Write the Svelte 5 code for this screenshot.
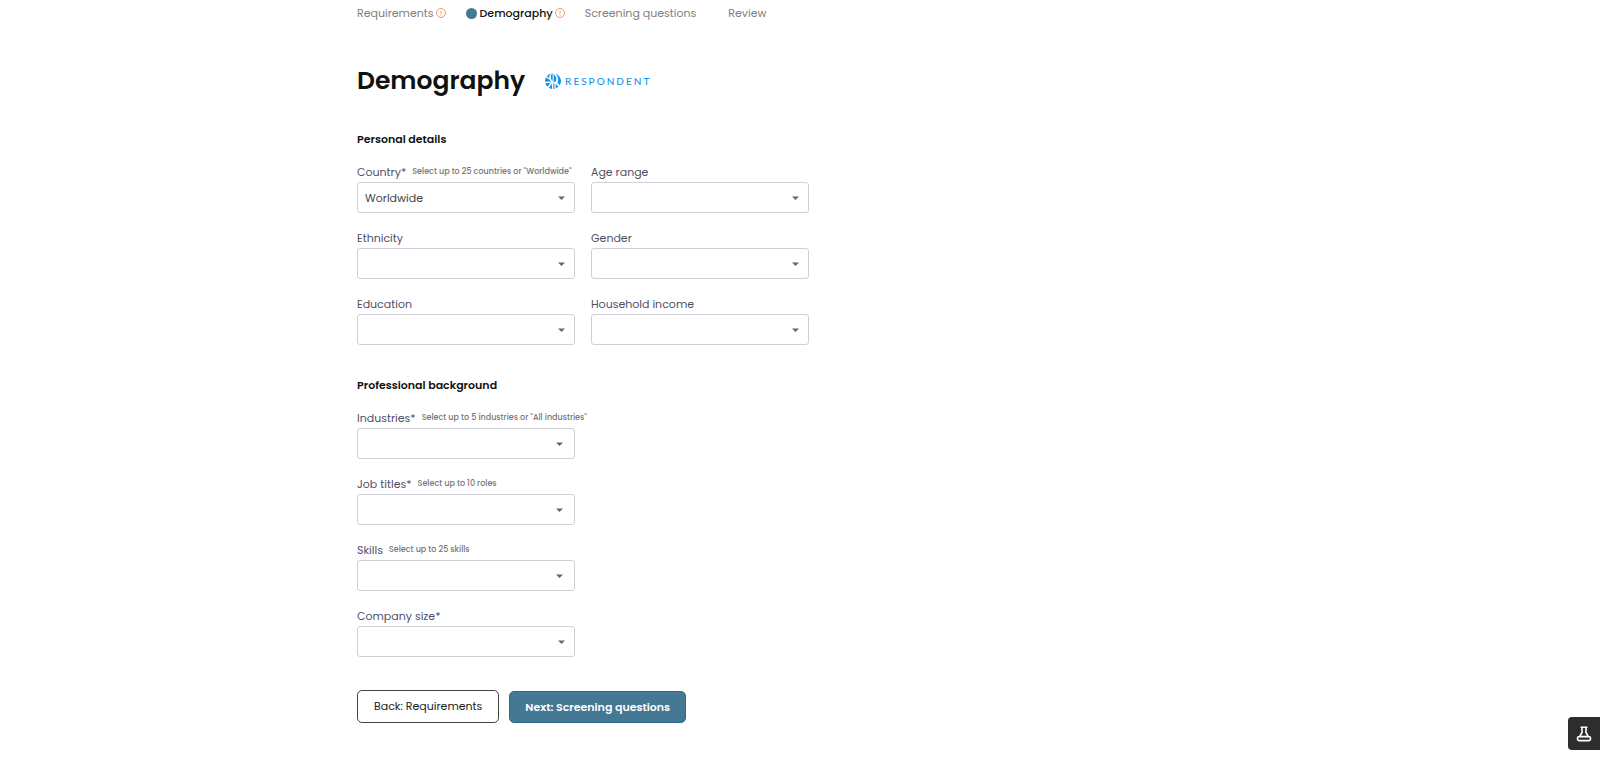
<script>
  let steps = [
    { name: "Requirements", warn: true },
    { name: "Demography", warn: true, current: true },
    { name: "Screening questions" },
    { name: "Review" },
  ];

  let personal = [
    {
      id: "country",
      label: "Country*",
      hint: 'Select up to 25 countries or "Worldwide"',
      value: "Worldwide",
    },
    { id: "age", label: "Age range" },
    { id: "ethnicity", label: "Ethnicity" },
    { id: "gender", label: "Gender" },
    { id: "education", label: "Education" },
    { id: "income", label: "Household income" },
  ];

  let professional = [
    {
      id: "industries",
      label: "Industries*",
      hint: 'Select up to 5 industries or "All industries"',
      search: true,
    },
    {
      id: "titles",
      label: "Job titles*",
      hint: "Select up to 10 roles",
      search: true,
    },
    {
      id: "skills",
      label: "Skills",
      hint: "Select up to 25 skills",
      search: true,
    },
    { id: "size", label: "Company size*" },
  ];
</script>

{#snippet field(f)}
  <div class="field">
    <label class="field__label" for={f.id}>
      {f.label}
      {#if f.hint}<small class="field__hint">{f.hint}</small>{/if}
    </label>
    <div class="field__box" class:field__box--search={f.search}>
      <select id={f.id} class="field__select">
        <option>{f.value ?? ""}</option>
      </select>
      <svg class="field__arrow" viewBox="0 0 7 4" aria-hidden="true">
        <path d="M0 .5h7L3.5 4z" />
      </svg>
    </div>
  </div>
{/snippet}

<main class="page">
  <nav>
    <ol class="steps">
      {#each steps as step}
        <li class="step" class:step--plain={!step.warn}>
          {#if step.current}<span class="step__dot"></span>{/if}
          <a
            href="#{step.name}"
            class="step__link"
            class:step__link--current={step.current}>{step.name}</a
          >
          {#if step.warn}
            <svg class="step__warn" viewBox="0 0 10 10" aria-hidden="true">
              <circle cx="5" cy="5" r="4.5" />
              <path d="M5 2.6v3M5 6.6v.9" />
            </svg>
          {/if}
        </li>
      {/each}
    </ol>
  </nav>

  <header class="header">
    <h1 class="header__title">Demography</h1>
    <div class="brand">
      <svg class="brand__mark" viewBox="0 0 16 16" aria-hidden="true">
        <path d="M1.6 3.4A8 8 0 0 1 6.2.3C4.6 1.6 4 3.2 4.2 5z" />
        <path d="M.9 4.6 4.6 6.4 6 8.4 0 8.8A8 8 0 0 1 .9 4.6z" />
        <path d="M.2 10.2l5.4-.4-3 3.9A8 8 0 0 1 .2 10.2z" />
        <path d="M3.8 14.8 7 10.6v5.3a8 8 0 0 1-3.2-1.1z" />
        <path d="M7.6 0V8C5.2 6.2 5 1.8 7.6 0z" />
        <path d="M10.4.4a8 8 0 0 1 4.4 11.8L12.4 10C14 6.4 13 2.8 10.4.4z" />
        <path d="M8.6 1c2.8 2 3.4 5 2.2 7.6l-2.2.6z" />
        <path d="M8.2 10.6h1.2v5.3H8.2zM10.6 10.8l3 2.8a8 8 0 0 1-3 1.9z" />
      </svg>
      <span class="brand__name">RESPONDENT</span>
    </div>
  </header>

  <form>
    <section class="section">
      <h2 class="section__title">Personal details</h2>
      <div class="fields fields--two">
        {#each personal as f (f.id)}
          {@render field(f)}
        {/each}
      </div>
    </section>

    <section class="section">
      <h2 class="section__title">Professional background</h2>
      <div class="fields">
        {#each professional as f (f.id)}
          {@render field(f)}
        {/each}
      </div>
    </section>

    <div class="actions">
      <button type="button" class="btn">Back: Requirements</button>
      <button type="button" class="btn btn--primary"
        >Next: Screening questions</button
      >
    </div>
  </form>
</main>

<button type="button" class="lab" aria-label="Experiments">
  <svg class="lab__icon" viewBox="0 0 16 16" aria-hidden="true">
    <path d="M4.5 1.2h7M6 1.2v5.3L3.6 10.6M10 1.2v5.3l2.4 4.1M3.4 10.6h9.2c2.6 0 2.6 4 0 4H3.4c-2.6 0-2.6-4 0-4z" />
  </svg>
</button>

<style>
  :global(body) {
    margin: 0;
    background: #fff;
    font-family: Poppins, Inter, sans-serif;
    color: #111;
  }
  .page {
    max-width: 886px;
    margin: 0 auto;
    padding-bottom: 37px;
  }
  .steps {
    display: flex;
    flex-wrap: wrap;
    gap: 20px;
    margin: 0;
    padding: 3px 0 0;
    list-style: none;
  }
  .step {
    display: flex;
    align-items: center;
    gap: 2px;
    height: 20px;
  }
  .step--plain {
    margin-right: 12px;
  }
  .step__link {
    font-size: 11px;
    line-height: 20px;
    color: #808080;
    text-decoration: none;
  }
  .step__link--current {
    font-weight: 500;
    color: #111;
  }
  .step__dot {
    width: 11px;
    height: 11px;
    margin-right: 1px;
    border-radius: 50%;
    background: #457895;
  }
  .step__warn {
    width: 10px;
    height: 10px;
    fill: none;
    stroke: #f59a5c;
  }
  .header {
    display: flex;
    align-items: center;
    gap: 20px;
    height: 37px;
    margin-top: 39px;
  }
  .header__title {
    margin: 0;
    font-size: 25px;
    line-height: 37px;
    font-weight: 600;
  }
  .brand {
    display: flex;
    align-items: center;
    gap: 4px;
    color: #1595f0;
  }
  .brand__mark {
    width: 16px;
    height: 16px;
    fill: currentColor;
  }
  .brand__name {
    font-family: Lato, sans-serif;
    font-size: 10px;
    font-weight: 500;
    letter-spacing: 2px;
  }
  .section {
    margin-top: 30px;
  }
  .section__title {
    margin: 0 0 12px;
    font-size: 11px;
    line-height: 20px;
    font-weight: 600;
  }
  .fields {
    display: grid;
    grid-template-columns: 218px;
    gap: 14px 16px;
  }
  .fields--two {
    grid-template-columns: repeat(2, 218px);
  }
  .field__label {
    display: flex;
    align-items: center;
    gap: 6px;
    height: 21px;
    font-size: 11px;
    line-height: 20px;
    color: #4f4f68;
    white-space: nowrap;
  }
  .field__hint {
    font-size: 8px;
    font-weight: 500;
    color: #777;
  }
  .field__box {
    display: grid;
    align-items: center;
    height: 31px;
  }
  .field__box > * {
    grid-area: 1 / 1;
  }
  .field__select {
    width: 100%;
    height: 31px;
    padding: 0 24px 0 7px;
    border: 1px solid #cfcfd6;
    border-radius: 3px;
    background: #fff;
    font-family: inherit;
    font-size: 11px;
    color: #444;
    appearance: none;
  }
  .field__arrow {
    justify-self: end;
    width: 7px;
    height: 4px;
    margin-right: 10px;
    fill: #666;
    pointer-events: none;
  }
  .field__box--search .field__arrow {
    margin-right: 12px;
  }
  .actions {
    display: flex;
    align-items: flex-end;
    gap: 10px;
    margin-top: 33px;
  }
  .btn {
    height: 33px;
    padding: 0 16px;
    border: 1px solid #444;
    border-radius: 5px;
    background: #fff;
    font-family: inherit;
    font-size: 11px;
    color: #222;
    cursor: pointer;
  }
  .btn--primary {
    height: 32px;
    padding: 0 15px;
    border-color: #2b6a8c;
    background: #457895;
    font-weight: 600;
    color: #fff;
  }
  .lab {
    position: fixed;
    right: 0;
    bottom: 10px;
    display: flex;
    align-items: center;
    justify-content: center;
    width: 32px;
    height: 33px;
    padding: 0;
    border: 0;
    border-radius: 4px 0 0 4px;
    background: #2d2d2d;
    cursor: pointer;
  }
  .lab__icon {
    width: 16px;
    height: 16px;
    fill: none;
    stroke: #fff;
    stroke-width: 1.6;
    stroke-linejoin: round;
  }
</style>
